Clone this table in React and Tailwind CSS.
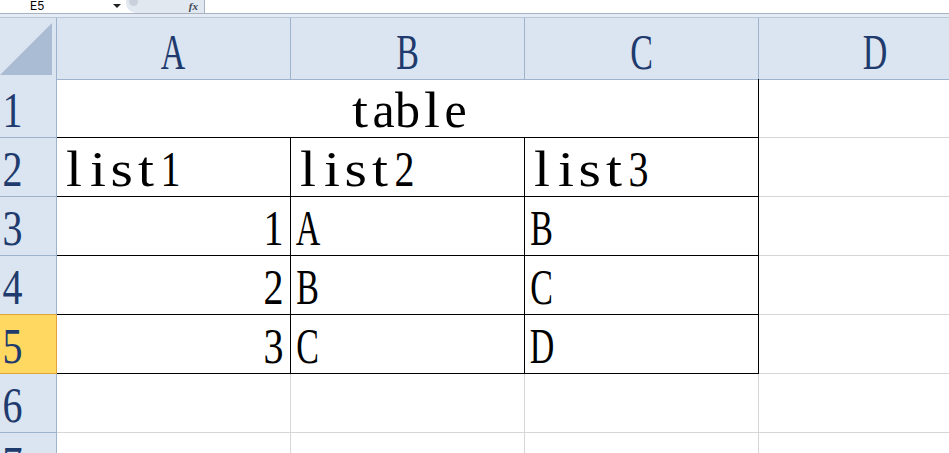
import clsx from 'clsx'

const COLS = ['A', 'B', 'C', 'D']

// each row: [A, B, C, D], align of A
const ROWS = [
  { n: 1, merged: 'table' },
  { n: 2, cells: ['list1', 'list2', 'list3', ''] },
  { n: 3, cells: ['1', 'A', 'B', ''], rightA: true },
  { n: 4, cells: ['2', 'B', 'C', ''], rightA: true },
  { n: 5, cells: ['3', 'C', 'D', ''], rightA: true, active: true },
  { n: 6, cells: ['', '', '', ''] },
  { n: 7, cells: ['', '', '', ''] },
]

function Mono({ text }) {
  // half-width serif glyphs, every char on a 24px advance
  return (
    <span className="inline-flex">
      {text.split('').map((ch, i) => (
        <span key={i} className="flex w-[24px] justify-center">
          <span
            className={clsx(
              'inline-block shrink-0',
              /[A-Z]/.test(ch) && 'scale-x-[0.68]',
              /[0-9]/.test(ch) && 'scale-x-[0.8]',
              /[ilts]/.test(ch) && 'scale-x-[1.15]'
            )}
          >
            {ch}
          </span>
        </span>
      ))}
    </span>
  )
}

function TopBar() {
  return (
    <div className="h-[14px] border-b border-[#a7b2c2] bg-white flex items-stretch text-black">
      <div className="w-[126px] flex items-center relative">
        <span className="ml-[30px] font-['Liberation_Mono',monospace] text-[12px] leading-none">E5</span>
        <span className="absolute left-[113px] top-[4px] w-0 h-0 border-l-[4px] border-r-[4px] border-t-[4px] border-l-transparent border-r-transparent border-t-[#222]" />
      </div>
      <div className="w-[79px] bg-[#e2e8f0] border-r border-[#a7b2c2] rounded-bl-[10px] flex items-center relative">
        <span className="absolute left-[3px] top-[-3px] w-[9px] h-[9px] rounded-full bg-[#c9d1dc]" />
        <span className="ml-auto mr-[6px] font-['Liberation_Serif',serif] italic font-bold text-[11px] leading-none text-[#3a4556]">fx</span>
      </div>
      <div className="flex-1" />
    </div>
  )
}

function HeaderRow() {
  return (
    <div className="border-t border-[#b7c6d9] grid grid-cols-[57px_234px_234px_234px_234px] h-[62px] bg-[#dbe5f1]">
      <div className="border-r border-b border-[#9eb4cd] flex items-start">
        <svg width="56" height="61" className="block">
          <polygon points="52,5 52,57 0,57" fill="#aabbd4" />
        </svg>
      </div>
      {COLS.map((c) => (
        <div
          key={c}
          className="border-r border-b border-[#9eb4cd] flex items-end justify-center pb-[2px] text-[#1f3b6e] font-['Liberation_Serif',serif] text-[50px] leading-none"
        >
          <Mono text={c} />
        </div>
      ))}
    </div>
  )
}

function RowHead({ n, active, beforeActive }) {
  return (
    <div
      className={clsx(
        'border-r border-b flex items-end pb-[2px] text-[#1f3b6e]',
        active ? 'bg-[#ffd862] border-[#e2a33c]' : 'bg-[#dbe5f1] border-[#9eb4cd]',
        beforeActive && 'border-b-[#e2a33c]'
      )}
    >
      <Mono text={String(n)} />
    </div>
  )
}

function Body() {
  return (
    <div className="grid grid-cols-[57px_234px_234px_234px_234px] auto-rows-[59px] font-['Liberation_Serif',serif] text-[50px] leading-none text-black">
      {ROWS.map((r, ri) => {
        const inTable = r.n <= 5
        const head = (
          <RowHead key={`h${r.n}`} n={r.n} active={r.active} beforeActive={ROWS[ri + 1]?.active} />
        )
        if (r.merged) {
          return [
            head,
            <div
              key={`m${r.n}`}
              className="col-span-3 border-r border-b border-black flex items-end justify-center pb-[2px]"
            >
              <Mono text={r.merged} />
            </div>,
            <div key={`d${r.n}`} className="border-r border-b border-[#d6d6d6]" />,
          ]
        }
        return [
          head,
          ...r.cells.map((v, ci) => {
            const table = inTable && ci < 3
            return (
              <div
                key={`${r.n}-${ci}`}
                className={clsx(
                  'border-r border-b flex items-end pb-[2px]',
                  table ? 'border-black' : 'border-[#d6d6d6]',
                  ci === 0 && r.rightA ? 'justify-end pr-[5px]' : 'pl-[5px]'
                )}
              >
                {v && <Mono text={v} />}
              </div>
            )
          }),
        ]
      })}
    </div>
  )
}

export default function App() {
  return (
    <div className="w-[949px] h-[453px] overflow-hidden bg-white">
      <TopBar />
      <div className="h-[3px] bg-[#e4ebf4]" />
      <HeaderRow />
      <Body />
    </div>
  )
}
